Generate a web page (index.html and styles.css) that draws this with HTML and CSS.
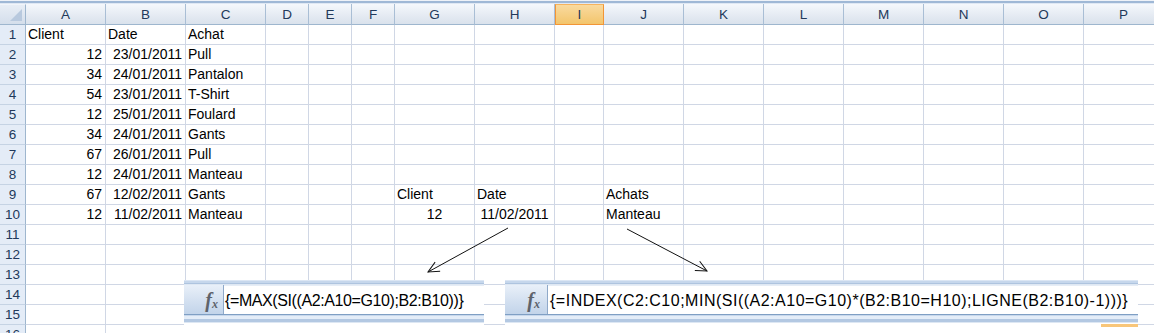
FILE: index.html
```html
<!DOCTYPE html>
<html lang="fr">
<head>
<meta charset="utf-8">
<title>Feuille</title>
<link rel="stylesheet" href="styles.css">
</head>
<body>
<div class="page">
  <div class="topstrip"></div>
  <div class="sheet">
    <div class="corner"><span class="tri"></span></div>
    <div class="ch">A</div><div class="ch">B</div><div class="ch">C</div><div class="ch">D</div><div class="ch">E</div><div class="ch">F</div><div class="ch">G</div><div class="ch">H</div><div class="ch sel">I</div><div class="ch">J</div><div class="ch">K</div><div class="ch">L</div><div class="ch">M</div><div class="ch">N</div><div class="ch">O</div><div class="ch">P</div>

    <div class="rh">1</div><div class="c">Client</div><div class="c">Date</div><div class="c">Achat</div><div class="c"></div><div class="c"></div><div class="c"></div><div class="c"></div><div class="c"></div><div class="c"></div><div class="c"></div><div class="c"></div><div class="c"></div><div class="c"></div><div class="c"></div><div class="c"></div><div class="c"></div>
    <div class="rh">2</div><div class="c r">12</div><div class="c r">23/01/2011</div><div class="c">Pull</div><div class="c"></div><div class="c"></div><div class="c"></div><div class="c"></div><div class="c"></div><div class="c"></div><div class="c"></div><div class="c"></div><div class="c"></div><div class="c"></div><div class="c"></div><div class="c"></div><div class="c"></div>
    <div class="rh">3</div><div class="c r">34</div><div class="c r">24/01/2011</div><div class="c">Pantalon</div><div class="c"></div><div class="c"></div><div class="c"></div><div class="c"></div><div class="c"></div><div class="c"></div><div class="c"></div><div class="c"></div><div class="c"></div><div class="c"></div><div class="c"></div><div class="c"></div><div class="c"></div>
    <div class="rh">4</div><div class="c r">54</div><div class="c r">23/01/2011</div><div class="c">T-Shirt</div><div class="c"></div><div class="c"></div><div class="c"></div><div class="c"></div><div class="c"></div><div class="c"></div><div class="c"></div><div class="c"></div><div class="c"></div><div class="c"></div><div class="c"></div><div class="c"></div><div class="c"></div>
    <div class="rh">5</div><div class="c r">12</div><div class="c r">25/01/2011</div><div class="c">Foulard</div><div class="c"></div><div class="c"></div><div class="c"></div><div class="c"></div><div class="c"></div><div class="c"></div><div class="c"></div><div class="c"></div><div class="c"></div><div class="c"></div><div class="c"></div><div class="c"></div><div class="c"></div>
    <div class="rh">6</div><div class="c r">34</div><div class="c r">24/01/2011</div><div class="c">Gants</div><div class="c"></div><div class="c"></div><div class="c"></div><div class="c"></div><div class="c"></div><div class="c"></div><div class="c"></div><div class="c"></div><div class="c"></div><div class="c"></div><div class="c"></div><div class="c"></div><div class="c"></div>
    <div class="rh">7</div><div class="c r">67</div><div class="c r">26/01/2011</div><div class="c">Pull</div><div class="c"></div><div class="c"></div><div class="c"></div><div class="c"></div><div class="c"></div><div class="c"></div><div class="c"></div><div class="c"></div><div class="c"></div><div class="c"></div><div class="c"></div><div class="c"></div><div class="c"></div>
    <div class="rh">8</div><div class="c r">12</div><div class="c r">24/01/2011</div><div class="c">Manteau</div><div class="c"></div><div class="c"></div><div class="c"></div><div class="c"></div><div class="c"></div><div class="c"></div><div class="c"></div><div class="c"></div><div class="c"></div><div class="c"></div><div class="c"></div><div class="c"></div><div class="c"></div>
    <div class="rh">9</div><div class="c r">67</div><div class="c r">12/02/2011</div><div class="c">Gants</div><div class="c"></div><div class="c"></div><div class="c"></div><div class="c">Client</div><div class="c">Date</div><div class="c"></div><div class="c">Achats</div><div class="c"></div><div class="c"></div><div class="c"></div><div class="c"></div><div class="c"></div><div class="c"></div>
    <div class="rh">10</div><div class="c r">12</div><div class="c r">11/02/2011</div><div class="c">Manteau</div><div class="c"></div><div class="c"></div><div class="c"></div><div class="c m">12</div><div class="c m">11/02/2011</div><div class="c"></div><div class="c">Manteau</div><div class="c"></div><div class="c"></div><div class="c"></div><div class="c"></div><div class="c"></div><div class="c"></div>
    <div class="rh">11</div><div class="c"></div><div class="c"></div><div class="c"></div><div class="c"></div><div class="c"></div><div class="c"></div><div class="c"></div><div class="c"></div><div class="c"></div><div class="c"></div><div class="c"></div><div class="c"></div><div class="c"></div><div class="c"></div><div class="c"></div><div class="c"></div>
    <div class="rh">12</div><div class="c"></div><div class="c"></div><div class="c"></div><div class="c"></div><div class="c"></div><div class="c"></div><div class="c"></div><div class="c"></div><div class="c"></div><div class="c"></div><div class="c"></div><div class="c"></div><div class="c"></div><div class="c"></div><div class="c"></div><div class="c"></div>
    <div class="rh">13</div><div class="c"></div><div class="c"></div><div class="c"></div><div class="c"></div><div class="c"></div><div class="c"></div><div class="c"></div><div class="c"></div><div class="c"></div><div class="c"></div><div class="c"></div><div class="c"></div><div class="c"></div><div class="c"></div><div class="c"></div><div class="c"></div>
    <div class="rh">14</div><div class="c"></div><div class="c"></div><div class="c"></div><div class="c"></div><div class="c"></div><div class="c"></div><div class="c"></div><div class="c"></div><div class="c"></div><div class="c"></div><div class="c"></div><div class="c"></div><div class="c"></div><div class="c"></div><div class="c"></div><div class="c"></div>
    <div class="rh">15</div><div class="c"></div><div class="c"></div><div class="c"></div><div class="c"></div><div class="c"></div><div class="c"></div><div class="c"></div><div class="c"></div><div class="c"></div><div class="c"></div><div class="c"></div><div class="c"></div><div class="c"></div><div class="c"></div><div class="c"></div><div class="c"></div>
    <div class="rh">16</div><div class="c"></div><div class="c"></div><div class="c"></div><div class="c"></div><div class="c"></div><div class="c"></div><div class="c"></div><div class="c"></div><div class="c"></div><div class="c"></div><div class="c"></div><div class="c"></div><div class="c"></div><div class="c"></div><div class="c"></div><div class="c"></div>
  </div>

  <svg class="arrows" width="1154" height="333" viewBox="0 0 1154 333">
    <defs>
      <marker id="head" markerUnits="userSpaceOnUse" markerWidth="14" markerHeight="14" refX="12" refY="6" orient="auto">
        <path d="M1,0.8 L12,6 L1,11.2" fill="none" stroke="#111" stroke-width="1"/>
      </marker>
    </defs>
    <line x1="508" y1="228" x2="428" y2="272" stroke="#111" stroke-width="1" marker-end="url(#head)"/>
    <line x1="627" y1="229" x2="707" y2="271" stroke="#111" stroke-width="1" marker-end="url(#head)"/>
  </svg>

  <div class="fbar fbar1">
    <div class="fb-top"></div>
    <div class="fb-main">
      <div class="fxbtn"><span class="fx"><i>f</i><sub>x</sub></span></div>
      <div class="fb-input">{=MAX(SI((A2:A10=G10);B2:B10))}</div>
    </div>
    <div class="fb-bot"></div>
    <div class="fb-tail"></div>
  </div>

  <div class="fbar fbar2">
    <div class="fb-top"></div>
    <div class="fb-main">
      <div class="fxbtn"><span class="fx"><i>f</i><sub>x</sub></span></div>
      <div class="fb-input">{=INDEX(C2:C10;MIN(SI((A2:A10=G10)*(B2:B10=H10);LIGNE(B2:B10)-1)))}</div>
    </div>
    <div class="fb-bot"></div>
    <div class="fb-tail"><span class="orange"></span></div>
  </div>
</div>
</body>
</html>
```

FILE: styles.css
```css
* { box-sizing: border-box; }
html, body { margin: 0; padding: 0; background: #fff; }
body { width: 1154px; height: 333px; overflow: hidden; }
.page { position: relative; width: 1154px; height: 333px; overflow: hidden; }

.topstrip {
  height: 4px;
  background: linear-gradient(#eef2f8 0 1px, #9fb8d6 1px 3px, #dfe8f4 3px 4px);
}

.sheet {
  display: grid;
  grid-template-columns: 26px 80px 80px 80px 43px 43px 43px 80px 80px 49px 80px 80px 80px 80px 80px 80px 80px;
  grid-template-rows: 21px repeat(16, 20px);
  font-family: "Liberation Sans", Arial, sans-serif;
  font-size: 14px;
  color: #000;
}

.corner {
  position: relative;
  background: linear-gradient(#e8eef6, #d4deeb);
  border-right: 1px solid #9eb6ce;
  border-bottom: 1px solid #9eb6ce;
  border-top: 1px solid #f2f5fa;
}
.tri {
  position: absolute;
  right: 3px;
  bottom: 3px;
  width: 0;
  height: 0;
  border-left: 12px solid transparent;
  border-bottom: 12px solid #b8c9de;
}

.ch {
  background: linear-gradient(#f5f8fc, #e4eaf2 60%, #dae2ec);
  border-right: 1px solid #a9bed5;
  border-bottom: 1px solid #9eb6ce;
  text-align: center;
  font-size: 13.5px;
  line-height: 21px;
  color: #22395a;
}
.ch.sel {
  background: linear-gradient(#f9da9f, #f3c56c);
  border: 1px solid #f29536;
  border-top-color: #f6b35d;
  line-height: 19px;
}

.rh {
  background: #e4ecf7;
  border-right: 1px solid #9eb6ce;
  border-bottom: 1px solid #c5d3e4;
  text-align: center;
  font-size: 13.5px;
  line-height: 20px;
  color: #22395a;
}

.c {
  border-right: 1px solid #d0d7e5;
  border-bottom: 1px solid #d0d7e5;
  line-height: 19px;
  padding: 0 2px;
  white-space: nowrap;
  overflow: visible;
}
.c.r { text-align: right; padding-right: 3px; }
.c.m { text-align: center; }

.arrows {
  position: absolute;
  left: 0;
  top: 0;
  z-index: 2;
  pointer-events: none;
}

.fbar {
  position: absolute;
  top: 280px;
  height: 53px;
  background: #fff;
  z-index: 3;
  display: flex;
  flex-direction: column;
}
.fbar1 { left: 184px; width: 300px; }
.fbar2 { left: 505px; width: 633px; }

.fb-top {
  height: 4px;
  background: linear-gradient(#dbe6f4 0 1px, #c6d7ec 1px 3px, #aec4df 3px 4px);
}
.fb-main {
  height: 30px;
  display: flex;
  background: #fff;
  border-top: 1px solid #dfe8f3;
}
.fxbtn {
  width: 40px;
  background: linear-gradient(#e9f0f9, #d3e0f0 55%, #c2d4ea);
  border-right: 1px solid #8fa9c9;
  display: flex;
  align-items: center;
  justify-content: flex-end;
  padding-right: 5px;
}
.fbar2 .fxbtn { width: 43px; padding-right: 7px; }
.fx {
  font-family: "Liberation Serif", "Times New Roman", serif;
  color: #5e636b;
  font-size: 20px;
  font-weight: bold;
  line-height: 1;
}
.fx i { font-style: italic; }
.fx sub {
  font-size: 12px;
  font-style: italic;
  vertical-align: baseline;
  position: relative;
  top: 1px;
}
.fb-input {
  flex: 1;
  font-family: "Liberation Sans", Arial, sans-serif;
  font-size: 16px;
  letter-spacing: -0.4px;
  line-height: 29px;
  padding-left: 1px;
  color: #000;
  white-space: nowrap;
  overflow: hidden;
  border-top: 1px solid #e6edf6;
}
.fbar2 .fb-input { padding-left: 2px; letter-spacing: 0.5px; }
.fb-bot {
  height: 9px;
  background: linear-gradient(#7f9fc4 0 1px, #c8d8ec 1px 2px, #e4edf8 2px 5px, #b3c8e2 5px 8px, #dde7f3 8px 9px);
}
.fb-tail {
  flex: 1;
  display: flex;
  justify-content: flex-end;
  align-items: flex-start;
}
.orange {
  display: block;
  width: 37px;
  height: 3px;
  margin-top: 1px;
  background: #f8c67a;
}
```
